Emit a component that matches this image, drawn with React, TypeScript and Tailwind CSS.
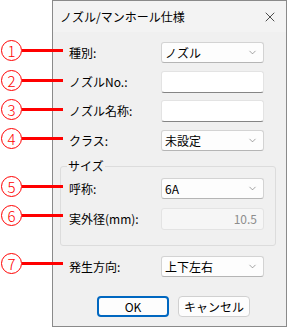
import { ChevronDown, X } from "lucide-react";

const font = { fontFamily: '"Noto Sans CJK JP", "Noto Sans", sans-serif' };

const marks = [
  { n: "1", y: 51 },
  { n: "2", y: 81 },
  { n: "3", y: 110 },
  { n: "4", y: 139 },
  { n: "5", y: 187 },
  { n: "6", y: 216 },
  { n: "7", y: 264 },
];

export default function App() {
  return (
    <div className="relative flex h-[328px] w-[287px] bg-white text-[12px] text-black" style={font}>
      <div className="w-[52px] shrink-0" />
      <div className="flex h-[327px] w-[235px] flex-col border border-[#8a8a8a] bg-[#f0f0f0]">
        <div className="flex h-[31px] shrink-0 items-center justify-between bg-[#f3f3f3] pl-[7px] pr-[8px]">
          <span className="text-[12px] leading-none">ノズル/マンホール仕様</span>
          <X className="h-[16px] w-[16px] text-[#222]" strokeWidth={1.2} />
        </div>

        <div className="flex flex-col pl-[16px] pr-[22px] pt-[10px]">
          <Row label="種別:">
            <Select value="ノズル" />
          </Row>
          <Row label="ノズルNo.:" className="mt-[8px]">
            <TextBox />
          </Row>
          <Row label="ノズル名称:" className="mt-[7px]">
            <TextBox />
          </Row>
          <Row label="クラス:" className="mt-[8px]">
            <Select value="未設定" />
          </Row>
        </div>

        <fieldset className="ml-[7px] mr-[10px] mt-[7px] h-[88px] rounded-[3px] border border-[#dcdcdc] pl-[8px] pr-[11px]">
          <legend className="-ml-[2px] px-[1px] leading-[16px]">サイズ</legend>
          <Row label="呼称:" className="mt-[4px]">
            <Select value="6A" />
          </Row>
          <Row label="実外径(mm):" className="mt-[9px]">
            <div className="flex h-[22px] w-[103px] items-center justify-end rounded-[3px] border border-[#e3e3e3] bg-[#f6f6f6] pr-[6px] text-[#8d8d8d]">
              10.5
            </div>
          </Row>
        </fieldset>

        <div className="flex flex-col pl-[16px] pr-[22px] pt-[10px]">
          <Row label="発生方向:">
            <Select value="上下左右" />
          </Row>
        </div>

        <div className="mt-[19px] flex gap-[9px] pl-[44px]">
          <button className="h-[21px] w-[72px] rounded-[4px] border-2 border-[#0067c0] bg-[#fdfdfd] text-[12px] leading-none">
            OK
          </button>
          <button className="h-[21px] w-[72px] rounded-[4px] border border-[#d0d0d0] bg-[#fdfdfd] text-[12px] leading-none">
            キャンセル
          </button>
        </div>
      </div>

      {marks.map((m) => (
        <div key={m.n} className="absolute left-[1px] flex items-center" style={{ top: m.y - 11 }}>
          <div className="flex h-[21px] w-[21px] items-center justify-center rounded-full border border-[#ff0000] text-[15px] font-light leading-none text-[#ff0000]">
            {m.n}
          </div>
          <div className="h-[3px] w-[41px] bg-[#ff0000]" />
        </div>
      ))}
    </div>
  );
}

function Row({ label, children, className = "" }: { label: string; children: React.ReactNode; className?: string }) {
  return (
    <div className={`flex items-center justify-between ${className}`}>
      <span className="leading-none">{label}</span>
      {children}
    </div>
  );
}

function Select({ value }: { value: string }) {
  return (
    <div className="flex h-[21px] w-[103px] items-center justify-between rounded-[3px] border border-[#d3d3d3] border-b-[#b5b5b5] bg-[#fdfdfd] pl-[3px] pr-[5px]">
      <span className="leading-none">{value}</span>
      <ChevronDown className="h-[11px] w-[11px] text-[#666]" strokeWidth={1.3} />
    </div>
  );
}

function TextBox() {
  return <div className="h-[22px] w-[103px] rounded-[3px] border border-[#e3e3e3] border-b-[#858585] bg-white" />;
}
